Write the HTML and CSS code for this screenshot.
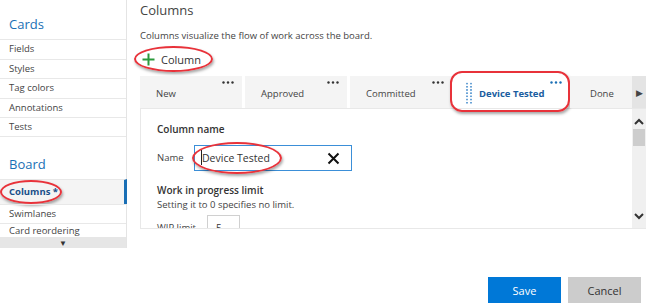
FILE: index.html
```html
<!DOCTYPE html>
<html lang="en">
<head>
  <meta charset="UTF-8">
  <title>Board settings - Columns</title>
  <link rel="stylesheet" href="styles.css">
</head>
<body>
  <div class="dialog">
    <div class="top">
      <!-- Left navigation -->
      <nav class="sidebar">
        <h3>Cards</h3>
        <ul class="nav-list first">
          <li>Fields</li>
          <li>Styles</li>
          <li>Tag colors</li>
          <li>Annotations</li>
          <li>Tests</li>
        </ul>
        <h3>Board</h3>
        <ul class="nav-list">
          <li class="active"><span class="circled circled-nav">Columns *</span></li>
          <li>Swimlanes</li>
          <li class="cut">Card reordering</li>
        </ul>
        <div class="nav-more">&#9660;</div>
      </nav>

      <!-- Columns settings -->
      <section class="main">
        <h2>Columns</h2>
        <p class="intro">Columns visualize the flow of work across the board.</p>
        <div class="add-column">
          <svg class="plus" width="13" height="13" viewBox="0 0 13 13">
            <path d="M6.5 0.5 V12.5 M0.5 6.5 H12.5" stroke="#2b9a3c" stroke-width="2"/>
          </svg>
          Column
        </div>

        <div class="tabs">
          <div class="tab"><span>New</span><svg class="more" width="12" height="3" viewBox="0 0 12 3"><circle cx="1.5" cy="1.5" r="1.2"/><circle cx="6" cy="1.5" r="1.2"/><circle cx="10.5" cy="1.5" r="1.2"/></svg></div>
          <div class="tab"><span>Approved</span><svg class="more" width="12" height="3" viewBox="0 0 12 3"><circle cx="1.5" cy="1.5" r="1.2"/><circle cx="6" cy="1.5" r="1.2"/><circle cx="10.5" cy="1.5" r="1.2"/></svg></div>
          <div class="tab"><span>Committed</span><svg class="more" width="12" height="3" viewBox="0 0 12 3"><circle cx="1.5" cy="1.5" r="1.2"/><circle cx="6" cy="1.5" r="1.2"/><circle cx="10.5" cy="1.5" r="1.2"/></svg></div>
          <div class="tab selected">
            <span class="grip"></span>
            <span>Device Tested</span><svg class="more" width="12" height="3" viewBox="0 0 12 3"><circle cx="1.5" cy="1.5" r="1.2"/><circle cx="6" cy="1.5" r="1.2"/><circle cx="10.5" cy="1.5" r="1.2"/></svg>
          </div>
          <div class="tab last"><span>Done</span></div>
          <div class="tab-arrow">&#9654;</div>
        </div>

        <div class="details">
          <div class="details-body">
            <div class="label-strong">Column name</div>
            <div class="field-row">
              <label>Name</label>
              <div class="textbox">
                <span class="caret"></span><span class="circled circled-name">Device Tested</span>
                <svg class="clear" width="13" height="13" viewBox="0 0 13 13">
                  <path d="M1.5 1.5 L11.5 11.5 M11.5 1.5 L1.5 11.5" stroke="#111" stroke-width="2"/>
                </svg>
              </div>
            </div>
            <div class="label-strong wip">Work in progress limit</div>
            <div class="hint">Setting it to 0 specifies no limit.</div>
            <div class="field-row wip-row">
              <label>WIP limit</label>
              <div class="numbox">5</div>
            </div>
          </div>
          <div class="vscroll">
            <svg width="10" height="7" viewBox="0 0 10 7"><path d="M1 6 L5 2 L9 6" fill="none" stroke="#333" stroke-width="2"/></svg>
            <div class="thumb"></div>
            <div class="spacer"></div>
            <svg width="10" height="7" viewBox="0 0 10 7"><path d="M1 1 L5 5 L9 1" fill="none" stroke="#333" stroke-width="2"/></svg>
          </div>
        </div>
      </section>
    </div>

    <div class="footer">
      <button class="btn save">Save</button>
      <button class="btn cancel">Cancel</button>
    </div>
  </div>
</body>
</html>
```

FILE: styles.css
```css
/* Basic Reset */
* {
  margin: 0;
  padding: 0;
  box-sizing: border-box;
}

body {
  width: 648px;
  height: 308px;
  overflow: hidden;
  background: #fff;
  font-family: "Open Sans", "Noto Sans", sans-serif;
  color: #333;
}

.top {
  display: flex;
  height: 268px;
}

/* Sidebar */
.sidebar {
  width: 127px;
  flex-shrink: 0;
  border-right: 1px solid #e4e4e4;
  height: 248px;
  padding-top: 13px;
}

.sidebar h3 {
  font-size: 13px;
  font-weight: normal;
  color: #1a6fb5;
  padding-left: 9px;
  height: 26px;
  line-height: 22px;
}

.nav-list {
  list-style: none;
}

.nav-list.first {
  margin-bottom: 16px;
}

.nav-list li {
  height: 19.5px;
  line-height: 18px;
  font-size: 9.5px;
  color: #444;
  padding-left: 9px;
  border-top: 1px solid #e8e8e8;
  position: relative;
}

.nav-list li:last-child {
  border-bottom: 1px solid #e8e8e8;
}

.nav-list li.active {
  height: 25px;
  line-height: 23px;
  background: #f4f4f4;
  font-weight: bold;
  color: #1a4f8a;
  border-right: 3px solid #1a6fb5;
  margin-right: -1px;
}

.nav-list li.cut {
  height: 14px;
  line-height: 13px;
  overflow: hidden;
  border-bottom: none;
}

.nav-more {
  height: 11px;
  background: #e6e6e6;
  text-align: center;
  font-size: 8px;
  line-height: 12px;
  color: #333;
}

/* Red highlight ellipses lying over the screenshot */
.circled {
  position: relative;
}

.circled::after,
.add-column::after,
.tab.selected::after {
  content: "";
  position: absolute;
  border: 2px solid #e8323a;
  border-radius: 50%;
  box-shadow: 1px 2px 3px rgba(0, 0, 0, 0.35);
  pointer-events: none;
}

.circled-nav::after {
  left: -9px;
  right: -4px;
  top: -5px;
  bottom: -6px;
}

.circled-name::after {
  left: -10px;
  right: -12px;
  top: -9px;
  bottom: -9px;
}

/* Main area */
.main {
  flex: 1;
  padding: 0 7px 0 13px;
}

.main h2 {
  font-size: 13px;
  font-weight: normal;
  color: #444;
  margin-top: 2px;
  line-height: 17px;
}

.intro {
  font-size: 9.5px;
  color: #444;
  margin-top: 9px;
  line-height: 15px;
}

.add-column {
  position: relative;
  display: inline-flex;
  align-items: center;
  font-size: 11px;
  color: #333;
  margin-top: 6px;
  margin-left: 2px;
  height: 20px;
}

.add-column .plus {
  margin-right: 6px;
}

.add-column::after {
  left: -8px;
  right: -12px;
  top: -3px;
  bottom: -3px;
}

/* Tab strip */
.tabs {
  display: flex;
  margin-top: 5px;
  height: 33px;
  border-bottom: 1px solid #e8e8e8;
}

.tab {
  position: relative;
  width: 102px;
  margin-right: 3px;
  background: #f4f4f4;
  font-size: 9.5px;
  color: #444;
  padding-left: 16px;
  display: flex;
  align-items: center;
  padding-top: 4px;
}

.tab .more {
  position: absolute;
  top: 5px;
  right: 8px;
  fill: #333;
}

.tab.selected {
  width: 115px;
  background: #fff;
  margin-right: 0;
  padding-left: 10px;
  color: #1a5da0;
  font-weight: bold;
}

.tab.selected .more {
  fill: #1a6fb5;
}

.tab.selected::after {
  left: -5px;
  right: 0;
  top: -5px;
  bottom: -4px;
  border-radius: 12px;
}

.grip {
  width: 8px;
  height: 22px;
  margin-right: 6px;
  margin-top: -2px;
  background-image: radial-gradient(circle, #6aa3d6 0.9px, transparent 1.2px);
  background-size: 4px 3.2px;
}

.tab.last {
  width: 62px;
  margin-right: 0;
  padding-left: 20px;
}

.tab-arrow {
  width: 14px;
  background: #e4e4e4;
  font-size: 9px;
  color: #444;
  display: flex;
  align-items: center;
  justify-content: center;
  padding-top: 2px;
}

/* Column details */
.details {
  display: flex;
  height: 120px;
  border-left: 1px solid #e8e8e8;
  border-bottom: 1px solid #e8e8e8;
}

.details-body {
  flex: 1;
  padding: 12px 16px 0;
  overflow: hidden;
}

.label-strong {
  font-size: 10px;
  font-weight: 600;
  color: #333;
  line-height: 16px;
}

.field-row {
  display: flex;
  align-items: center;
  margin-top: 8px;
}

.field-row label {
  font-size: 9.5px;
  color: #444;
  width: 37px;
}

.textbox {
  position: relative;
  width: 158px;
  height: 26px;
  border: 1px solid #3b8fd8;
  display: flex;
  align-items: center;
  padding-left: 6px;
  font-size: 10.5px;
  color: #333;
}

.caret {
  width: 1px;
  height: 15px;
  background: #222;
}

.clear {
  position: absolute;
  right: 11px;
  top: 6px;
}

.label-strong.wip {
  margin-top: 11px;
}

.hint {
  font-size: 9.5px;
  color: #444;
  line-height: 13px;
}

.wip-row {
  margin-top: 4px;
}

.wip-row label {
  width: 50px;
}

.numbox {
  width: 33px;
  height: 26px;
  border: 1px solid #d0d0d0;
  font-size: 10px;
  padding: 5px 0 0 8px;
}

.vscroll {
  width: 14px;
  background: #f0f0f0;
  display: flex;
  flex-direction: column;
  align-items: center;
  padding: 9px 0 8px;
}

.vscroll .thumb {
  width: 12px;
  height: 17px;
  background: #cdcdcd;
  margin-top: 4px;
}

.vscroll .spacer {
  flex: 1;
}

/* Footer buttons */
.footer {
  display: flex;
  justify-content: flex-end;
  gap: 7px;
  padding: 9px 7px 0 0;
}

.btn {
  width: 73px;
  height: 26px;
  border: none;
  font-family: "Open Sans", "Noto Sans", sans-serif;
  font-size: 11px;
}

.save {
  background: #0078d7;
  color: #fff;
}

.cancel {
  background: #cccccc;
  color: #333;
}
```
